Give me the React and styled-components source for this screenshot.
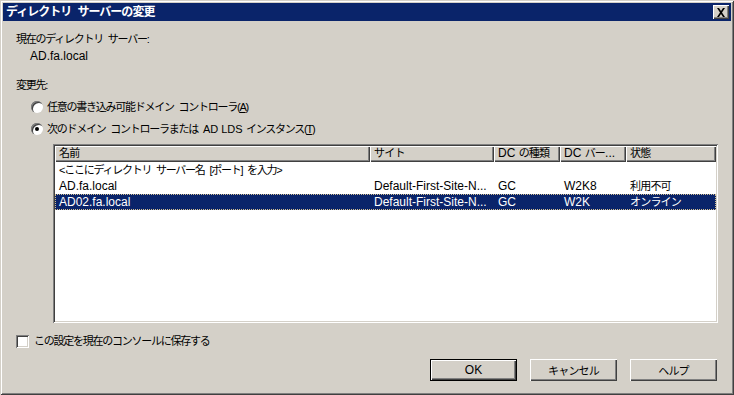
import React from 'react';
import styled, { createGlobalStyle } from 'styled-components';

const GlobalStyle = createGlobalStyle`
  html, body {
    margin: 0;
    padding: 0;
    background: #d4d0c8;
  }
  * { box-sizing: border-box; }
`;

const FONT = `"Liberation Sans", "Noto Sans CJK JP", sans-serif`;

// Japanese runs are narrower in the original UI font, so they get their own span
const Jp = styled.span`
  font-size: 11px;
  letter-spacing: ${p => p.$ls ?? -1.25}px;
  word-spacing: 3px;
`;

const columns = [
  { key: 'name', label: <Jp $ls={-0.8}>名前</Jp>, width: 315 },
  { key: 'site', label: <Jp $ls={-0.8}>サイト</Jp>, width: 124 },
  { key: 'type', label: <>DC <Jp $ls={-0.8}>の種類</Jp></>, width: 66 },
  { key: 'ver', label: <>DC <Jp $ls={-0.8}>バー</Jp>...</>, width: 66 },
  { key: 'state', label: <Jp $ls={-0.8}>状態</Jp>, width: 90 },
];

const rows = [
  { name: <Jp>&lt;ここにディレクトリ サーバー名 [ポート] を入力&gt;</Jp>, site: '', type: '', ver: '', state: '' },
  { name: 'AD.fa.local', site: 'Default-First-Site-N...', type: 'GC', ver: 'W2K8', state: <Jp $ls={-0.8}>利用不可</Jp> },
  { name: 'AD02.fa.local', site: 'Default-First-Site-N...', type: 'GC', ver: 'W2K', state: <Jp $ls={-0.8}>オンライン</Jp>, selected: true },
];

const App = () => {
  return (
    <>
      <GlobalStyle />
      <Window>
        <TitleBar>
          <TitleText>ディレクトリ サーバーの変更</TitleText>
          <CloseButton>
            <svg width="10" height="9" viewBox="0 0 10 9">
              <path d="M1 0h2l2 3 2-3h2L6 4.5 9 9H7L5 6 3 9H1l3-4.5z" fill="#000" />
            </svg>
          </CloseButton>
        </TitleBar>
        <Body>
          <Label><Jp>現在のディレクトリ サーバー:</Jp></Label>
          <Value>AD.fa.local</Value>
          <Label style={{ marginTop: 15 }}><Jp>変更先:</Jp></Label>
          <OptionRow>
            <Radio />
            <OptionText><Jp>任意の書き込み可能ドメイン コントローラ(<u>A</u>)</Jp></OptionText>
          </OptionRow>
          <OptionRow>
            <Radio checked />
            <OptionText>
              <Jp>次のドメイン コントローラまたは </Jp><Latin>AD LDS</Latin> <Jp>インスタンス(<u>T</u>)</Jp>
            </OptionText>
          </OptionRow>
          <ListBox>
            <HeaderRow>
              {columns.map(c => (
                <HeaderCell key={c.key} $w={c.width}>{c.label}</HeaderCell>
              ))}
            </HeaderRow>
            {rows.map((r, i) => (
              <Row key={i} $selected={r.selected}>
                {columns.map(c => (
                  <Cell key={c.key} $w={c.width}>{r[c.key]}</Cell>
                ))}
              </Row>
            ))}
          </ListBox>
          <CheckRow>
            <CheckBox />
            <OptionText><Jp>この設定を現在のコンソールに保存する</Jp></OptionText>
          </CheckRow>
          <ButtonRow>
            <Button $default>OK</Button>
            <Button><Jp $ls={-0.8}>キャンセル</Jp></Button>
            <Button><Jp $ls={-0.8}>ヘルプ</Jp></Button>
          </ButtonRow>
        </Body>
      </Window>
    </>
  );
};

const Latin = styled.span`
  font-size: 11px;
`;

const Window = styled.div`
  width: 734px;
  height: 395px;
  background: #d4d0c8;
  padding: 3px;
  box-shadow: inset 1px 1px 0 #d4d0c8, inset -1px -1px 0 #404040,
    inset 2px 2px 0 #ffffff, inset -2px -2px 0 #808080;
  font-family: ${FONT};
  font-size: 12px;
  color: #000;
  display: flex;
  flex-direction: column;
`;

const TitleBar = styled.div`
  height: 18px;
  background: #0a246a;
  display: flex;
  align-items: center;
  justify-content: space-between;
  padding: 0 2px 0 3px;
`;

const TitleText = styled.div`
  color: #fff;
  font-weight: bold;
  font-size: 12px;
  letter-spacing: -1px;
  word-spacing: 4px;
  line-height: 18px;
`;

const CloseButton = styled.div`
  width: 16px;
  height: 14px;
  background: #d4d0c8;
  display: flex;
  align-items: center;
  justify-content: center;
  box-shadow: inset 1px 1px 0 #ffffff, inset -1px -1px 0 #404040,
    inset -2px -2px 0 #808080;
`;

const Body = styled.div`
  flex: 1;
  display: flex;
  flex-direction: column;
  padding: 11px 14px 0 13px;
`;

const Label = styled.div`
  line-height: 14px;
`;

const Value = styled.div`
  line-height: 14px;
  margin: 3px 0 0 14px;
`;

const OptionRow = styled.div`
  display: flex;
  align-items: center;
  gap: 4px;
  height: 14px;
  margin: 8px 0 0 15px;
`;

const OptionText = styled.span`
  line-height: 14px;
  white-space: pre;
`;

const Radio = styled.span`
  width: 12px;
  height: 12px;
  border-radius: 50%;
  background: #fff;
  position: relative;
  box-shadow: inset 1px 1px 0 #808080, inset 2px 2px 0 #404040;
  &::after {
    content: '';
    display: ${p => (p.checked ? 'block' : 'none')};
    position: absolute;
    left: 4px;
    top: 4px;
    width: 4px;
    height: 4px;
    border-radius: 50%;
    background: #000;
  }
`;

const ListBox = styled.div`
  margin: 8px 0 0 37px;
  width: 665px;
  height: 179px;
  background: #fff;
  padding: 2px;
  box-shadow: inset 1px 1px 0 #808080, inset -1px -1px 0 #ffffff,
    inset 2px 2px 0 #404040, inset -2px -2px 0 #d4d0c8;
  display: flex;
  flex-direction: column;
`;

const HeaderRow = styled.div`
  display: flex;
  height: 16px;
  flex-shrink: 0;
`;

const HeaderCell = styled.div`
  width: ${p => p.$w}px;
  background: #d4d0c8;
  padding: 0 4px;
  line-height: 15px;
  white-space: nowrap;
  overflow: hidden;
  box-shadow: inset 1px 1px 0 #ffffff, inset -1px -1px 0 #404040,
    inset -2px -2px 0 #808080;
`;

const Row = styled.div`
  display: flex;
  height: 16px;
  background: ${p => (p.$selected ? '#0a246a' : 'transparent')};
  color: ${p => (p.$selected ? '#fff' : '#000')};
  outline: ${p => (p.$selected ? '1px dotted #d4c090' : 'none')};
  outline-offset: -1px;
`;

const Cell = styled.div`
  width: ${p => p.$w}px;
  padding: 0 4px;
  line-height: 16px;
  white-space: pre;
  overflow: hidden;
`;

const CheckRow = styled.div`
  display: flex;
  align-items: center;
  gap: 5px;
  margin: 11px 0 0 0;
  height: 14px;
`;

const CheckBox = styled.span`
  width: 13px;
  height: 13px;
  background: #fff;
  box-shadow: inset 1px 1px 0 #808080, inset -1px -1px 0 #ffffff,
    inset 2px 2px 0 #404040, inset -2px -2px 0 #d4d0c8;
`;

const ButtonRow = styled.div`
  display: flex;
  justify-content: flex-end;
  gap: 13px;
  margin-top: 11px;
`;

const Button = styled.div`
  width: 87px;
  height: 22px;
  display: flex;
  align-items: center;
  justify-content: center;
  background: #d4d0c8;
  box-shadow: ${p =>
    p.$default
      ? 'inset 0 0 0 1px #000, inset 2px 2px 0 #ffffff, inset -2px -2px 0 #404040, inset -3px -3px 0 #808080'
      : 'inset 1px 1px 0 #ffffff, inset -1px -1px 0 #404040, inset -2px -2px 0 #808080'};
`;

export default App;
